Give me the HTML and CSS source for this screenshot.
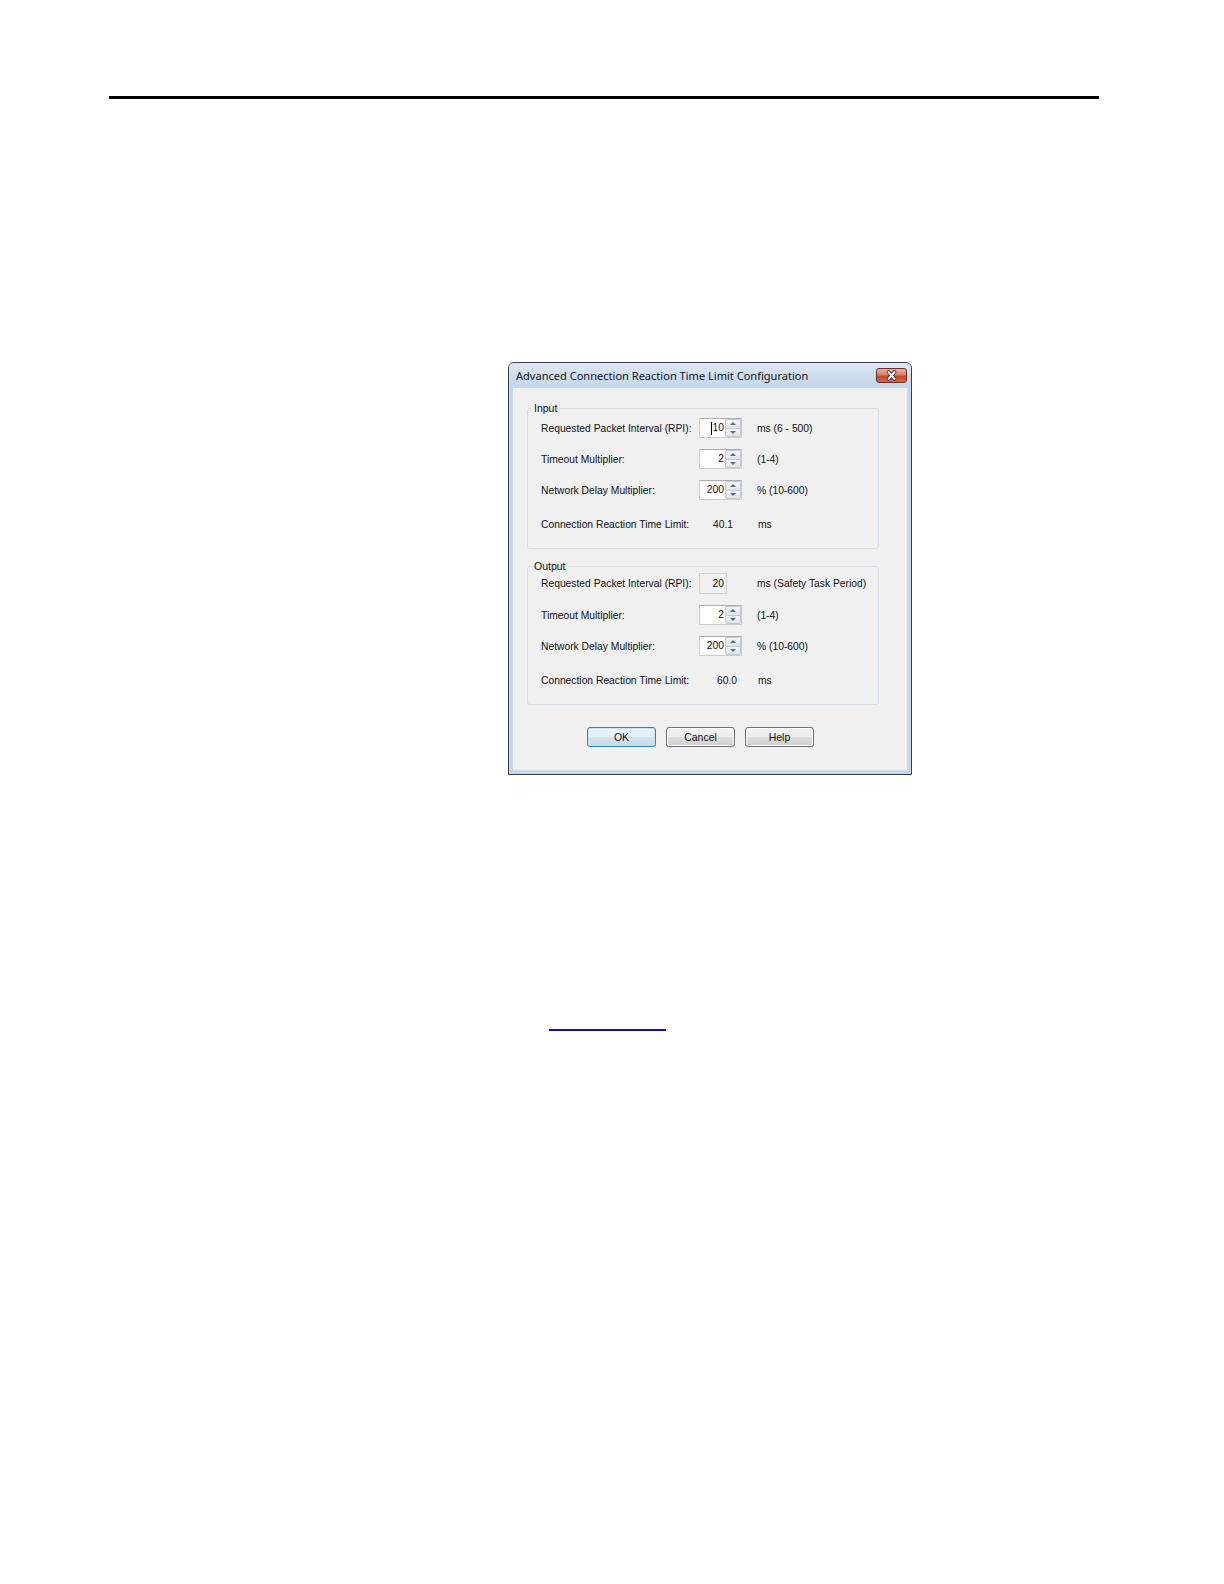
FILE: index.html
```html
<!DOCTYPE html>
<html lang="en">
<head>
<meta charset="utf-8">
<title>Advanced Connection Reaction Time Limit Configuration</title>
<link rel="stylesheet" href="styles.css">
</head>
<body>
<div class="page">
  <div class="rule"></div>

  <div class="window">
    <div class="titlebar">
      <span class="title">Advanced Connection Reaction Time Limit Configuration</span>
      <span class="close">
        <svg width="31" height="15" viewBox="0 0 31 15">
          <path d="M12.5 4 L18.5 11 M18.5 4 L12.5 11" stroke="#5a1f14" stroke-width="3.6" stroke-linecap="round" fill="none"/>
          <path d="M12.5 4 L18.5 11 M18.5 4 L12.5 11" stroke="#ffffff" stroke-width="2" stroke-linecap="round" fill="none"/>
        </svg>
      </span>
    </div>

    <div class="client">
      <fieldset class="group">
        <legend>Input</legend>
        <div class="rows">
          <div class="row">
            <span class="label">Requested Packet Interval (RPI):</span>
            <span class="spin"><span class="field"><span class="caret"></span>10</span><span class="arrows"><span class="arr up"></span><span class="arr down"></span></span></span>
            <span class="unit">ms (6 - 500)</span>
          </div>
          <div class="row">
            <span class="label">Timeout Multiplier:</span>
            <span class="spin"><span class="field">2</span><span class="arrows"><span class="arr up"></span><span class="arr down"></span></span></span>
            <span class="unit">(1-4)</span>
          </div>
          <div class="row">
            <span class="label">Network Delay Multiplier:</span>
            <span class="spin"><span class="field">200</span><span class="arrows"><span class="arr up"></span><span class="arr down"></span></span></span>
            <span class="unit">% (10-600)</span>
          </div>
          <div class="row result">
            <span class="label">Connection Reaction Time Limit:</span>
            <span class="value">40.1</span>
            <span class="unit unit-result">ms</span>
          </div>
        </div>
      </fieldset>

      <fieldset class="group group-output">
        <legend>Output</legend>
        <div class="rows">
          <div class="row row-first">
            <span class="label">Requested Packet Interval (RPI):</span>
            <span class="readonly">20</span>
            <span class="unit">ms (Safety Task Period)</span>
          </div>
          <div class="row">
            <span class="label">Timeout Multiplier:</span>
            <span class="spin"><span class="field">2</span><span class="arrows"><span class="arr up"></span><span class="arr down"></span></span></span>
            <span class="unit">(1-4)</span>
          </div>
          <div class="row">
            <span class="label">Network Delay Multiplier:</span>
            <span class="spin"><span class="field">200</span><span class="arrows"><span class="arr up"></span><span class="arr down"></span></span></span>
            <span class="unit">% (10-600)</span>
          </div>
          <div class="row result">
            <span class="label">Connection Reaction Time Limit:</span>
            <span class="value value-out">60.0</span>
            <span class="unit unit-result">ms</span>
          </div>
        </div>
      </fieldset>

      <div class="buttons">
        <button class="btn btn-default">OK</button>
        <button class="btn">Cancel</button>
        <button class="btn">Help</button>
      </div>
    </div>
  </div>

  <a class="link-line" href="#"></a>
</div>
</body>
</html>
```

FILE: styles.css
```css
* { box-sizing: border-box; }

html, body {
  margin: 0;
  padding: 0;
  background: #ffffff;
}

body {
  font-family: "Liberation Sans", Arial, sans-serif;
  color: #111111;
}

.page {
  padding-top: 96px;
  padding-bottom: 40px;
}

.rule {
  margin-left: 109px;
  width: 990px;
  height: 3px;
  background: #000000;
}

/* ---------- Window ---------- */
.window {
  margin: 263px 0 0 508px;
  width: 404px;
  border: 1px solid #3b4049;
  border-radius: 6px 6px 0 0;
  background: #c7d8ed;
}

.titlebar {
  height: 25px;
  display: flex;
  align-items: flex-start;
  justify-content: space-between;
  background: linear-gradient(#dde8f5 0%, #cfdeef 50%, #c4d6ec 100%);
  border-radius: 5px 5px 0 0;
}

.title {
  padding-left: 7px;
  line-height: 25px;
  font-family: "Noto Sans", "Open Sans", sans-serif;
  font-size: 11.05px;
  color: #151515;
  white-space: nowrap;
}

.close {
  margin-top: 5px;
  margin-right: 4px;
  width: 31px;
  height: 15px;
  display: flex;
  border: 1px solid #6a2b22;
  border-radius: 3px;
  background: linear-gradient(#eab3a6 0%, #d9806b 45%, #c4442c 55%, #d36a52 100%);
  overflow: hidden;
}

.close svg { display: block; margin: -1px; }

.client {
  margin: 0 4px 4px;
  padding: 13px 28px 23px 14px;
  background: #f0f0f0;
  font-size: 10.3px;
}

/* ---------- Group boxes ---------- */
.group {
  margin: 0;
  padding: 3px 0 14px 13px;
  border: 1px solid #d5dfe5;
  border-radius: 3px;
  min-width: 0;
}

.group-output {
  margin-top: 10px;
  padding-top: 0;
}

.group legend {
  margin-left: -9px;
  padding: 0 2px;
  line-height: 14px;
  font-size: 10.5px;
}

.rows {
  display: flex;
  flex-direction: column;
  gap: 11px;
}

.row {
  display: grid;
  grid-template-columns: 158px 57px auto;
  align-items: center;
  height: 20px;
}

.row-first { margin-bottom: 1px; }

.row.result { margin-top: 3px; }

.label, .unit { white-space: nowrap; }

.unit { padding-left: 1px; }
.unit-result { padding-left: 2px; }

.value { padding-left: 14px; }
.value-out { padding-left: 18px; }

/* ---------- Spin boxes ---------- */
.spin {
  display: flex;
  width: 43px;
  height: 20px;
  border: 1px solid #c9ccd3;
  border-top-color: #abadb3;
  background: #ffffff;
}

.field {
  flex: 1;
  display: flex;
  align-items: center;
  justify-content: flex-end;
  padding-right: 1px;
  line-height: 18px;
}

.caret {
  width: 1px;
  height: 13px;
  margin-right: 1px;
  background: #000000;
}

.arrows {
  width: 16px;
  display: flex;
  flex-direction: column;
}

.arr {
  flex: 1;
  display: flex;
  align-items: center;
  justify-content: center;
  border: 1px solid #c3c7ce;
  background: linear-gradient(#f6f6f6, #e2e3e6);
}

.arr.up { border-bottom-width: 0; border-radius: 2px 2px 0 0; }
.arr.down { border-radius: 0 0 2px 2px; }

.arr::after {
  content: "";
  width: 0;
  height: 0;
  border-left: 3px solid transparent;
  border-right: 3px solid transparent;
}

.arr.up::after { border-bottom: 3px solid #5b6b85; }
.arr.down::after { border-top: 3px solid #5b6b85; }

.readonly {
  width: 28px;
  height: 21px;
  display: flex;
  align-items: center;
  justify-content: flex-end;
  padding-right: 2px;
  border: 1px solid #d0d0d0;
  background: #f0f0f0;
}

/* ---------- Buttons ---------- */
.buttons {
  display: flex;
  gap: 10px;
  margin-top: 22px;
  padding-left: 60px;
}

.btn {
  width: 69px;
  height: 20px;
  padding: 0;
  font-family: "Liberation Sans", Arial, sans-serif;
  font-size: 10.5px;
  color: #111111;
  border: 1px solid #707070;
  border-radius: 3px;
  background: linear-gradient(#f3f3f3 0%, #ebebeb 48%, #dddddd 52%, #cfcfcf 100%);
  box-shadow: inset 0 0 0 1px #fbfbfb;
}

.btn-default {
  border-color: #3c7fb1;
  box-shadow: inset 0 0 0 1px #bfe5f8;
  background: linear-gradient(#eef5fa 0%, #e3edf4 48%, #d5e3ee 52%, #c8dbe9 100%);
}

/* ---------- Link ---------- */
.link-line {
  display: block;
  margin: 254px 0 0 549px;
  width: 117px;
  height: 2px;
  background: #15158f;
}
```
